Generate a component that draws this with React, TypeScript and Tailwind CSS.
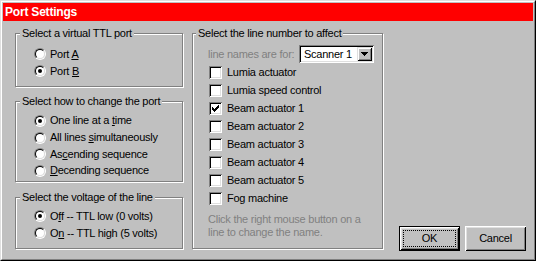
import * as React from 'react';

const sunken =
  'shadow-[inset_1px_1px_0_#808080,inset_-1px_-1px_0_#fff,inset_2px_2px_0_#000,inset_-2px_-2px_0_#dfdfdf]';
const raised =
  'shadow-[inset_1px_1px_0_#dfdfdf,inset_-1px_-1px_0_#000,inset_2px_2px_0_#fff,inset_-2px_-2px_0_#808080]';

const Hot = ({ children }: { children: React.ReactNode }) => (
  <span className="underline underline-offset-[1px] decoration-1">{children}</span>
);

const Radio = ({ checked }: { checked?: boolean }) => (
  <div className="size-[12px] shrink-0 rounded-full border border-t-[#808080] border-l-[#808080] border-r-white border-b-white">
    <div className="flex size-full items-center justify-center rounded-full border border-t-black border-l-black border-r-[#dfdfdf] border-b-[#dfdfdf] bg-white">
      {checked && <div className="size-[4px] rounded-full bg-black" />}
    </div>
  </div>
);

const Check = ({ checked }: { checked?: boolean }) => (
  <div className={`size-[13px] shrink-0 bg-white ${sunken}`}>
    {checked && (
      <svg width="13" height="13" viewBox="0 0 13 13" shapeRendering="crispEdges">
        <path
          d="M3 5h1v3H3zM4 6h1v3H4zM5 7h1v3H5zM6 6h1v3H6zM7 5h1v3H7zM8 4h1v3H8zM9 3h1v3H9z"
          fill="#000"
        />
      </svg>
    )}
  </div>
);

const Group = ({
  title,
  className,
  titleClass = 'ml-[4px]',
  children,
}: {
  title: string;
  className?: string;
  titleClass?: string;
  children: React.ReactNode;
}) => (
  <div
    className={`flex flex-col border border-[#808080] shadow-[inset_1px_1px_0_#fff,1px_1px_0_#fff] ${className ?? ''}`}
  >
    <div className={`-mt-[7px] w-fit bg-[#c0c0c0] px-[2px] ${titleClass}`}>{title}</div>
    {children}
  </div>
);

const RadioRow = ({
  checked,
  h = 'h-[17px]',
  children,
}: {
  checked?: boolean;
  h?: string;
  children: React.ReactNode;
}) => (
  <div className={`flex items-center gap-[4px] pl-[18px] ${h}`}>
    <Radio checked={checked} />
    <span>{children}</span>
  </div>
);

const lines = [
  'Lumia actuator',
  'Lumia speed control',
  'Beam actuator 1',
  'Beam actuator 2',
  'Beam actuator 3',
  'Beam actuator 4',
  'Beam actuator 5',
  'Fog machine',
];

export default function App() {
  const [checked] = React.useState(2);

  return (
    <div className="h-[261px] w-[536px] border border-t-[#dfdfdf] border-l-[#dfdfdf] border-r-black border-b-black bg-[#c0c0c0] font-['Liberation_Sans',Arial,sans-serif] text-[11px] leading-[13px] tracking-[-0.25px] text-black">
      <div className="flex h-full flex-col border border-t-white border-l-white border-r-[#808080] border-b-[#808080] p-[1px]">
        <div className="flex h-[18px] shrink-0 items-center bg-[#ff0000] pl-[2px] pt-[1px] text-[12px] font-bold tracking-[-0.2px] text-white">
          Port Settings
        </div>

        <div className="flex flex-1 pl-[12px] pt-[12px]">
          <div className="flex w-[168px] flex-col">
            <Group title="Select a virtual TTL port" className="h-[54px]">
              <div className="mt-[5.5px]">
                <RadioRow>
                  Port <Hot>A</Hot>
                </RadioRow>
                <RadioRow checked>
                  Port <Hot>B</Hot>
                </RadioRow>
              </div>
            </Group>

            <Group title="Select how to change the port" className="mt-[14px] h-[81px]">
              <div className="mt-[4.5px]">
                <RadioRow checked h="h-[16.7px]">
                  One line at a <Hot>t</Hot>ime
                </RadioRow>
                <RadioRow h="h-[16.7px]">
                  All lines <Hot>s</Hot>imultaneously
                </RadioRow>
                <RadioRow h="h-[16.7px]">
                  As<Hot>c</Hot>ending sequence
                </RadioRow>
                <RadioRow h="h-[16.7px]">
                  <Hot>D</Hot>ecending sequence
                </RadioRow>
              </div>
            </Group>

            <Group title="Select the voltage of the line" className="mt-[15px] h-[52px]">
              <div className="mt-[3.5px]">
                <RadioRow checked>
                  O<Hot>f</Hot>f -- TTL low (0 volts)
                </RadioRow>
                <RadioRow>
                  O<Hot>n</Hot> -- TTL high (5 volts)
                </RadioRow>
              </div>
            </Group>
          </div>

          <Group
            title="Select the line number to affect"
            className="ml-[9px] h-[216px] w-[191px]"
            titleClass="ml-[3px]"
          >
            <div className="mt-[5px] flex h-[18px] items-center justify-between pl-[15px] pr-[8px]">
              <span className="text-[#808080]">line names are for:</span>
              <div className={`flex h-[18px] w-[75px] items-center bg-white p-[2px] ${sunken}`}>
                <span className="flex-1 pl-[3px]">Scanner 1</span>
                <div className={`flex h-[14px] w-[15px] items-center justify-center bg-[#c0c0c0] ${raised}`}>
                  <svg width="7" height="4" viewBox="0 0 7 4" shapeRendering="crispEdges">
                    <path d="M0 0h7v1H0zM1 1h5v1H1zM2 2h3v1H2zM3 3h1v1H3z" fill="#000" />
                  </svg>
                </div>
              </div>
            </div>

            <div className="flex flex-col">
              {lines.map((name, i) => (
                <div key={name} className="flex h-[18px] items-center gap-[5px] pl-[16px]">
                  <Check checked={i === checked} />
                  <span>{name}</span>
                </div>
              ))}
            </div>

            <p className="mt-[6px] pl-[15px] text-[#808080]">
              Click the right mouse button on a
              <br />
              line to change the name.
            </p>
          </Group>

          <div className="mb-[7px] ml-[16px] flex gap-[5px] self-end">
            <button className="h-[25px] w-[61px] border border-black bg-[#c0c0c0] p-0 shadow-[inset_1px_1px_0_#fff,inset_-1px_-1px_0_#000,inset_2px_2px_0_#dfdfdf,inset_-2px_-2px_0_#808080]">
              <div className="mx-[3px] flex h-[17px] items-center justify-center border border-dotted border-black">
                OK
              </div>
            </button>
            <button className="h-[25px] w-[61px] bg-[#c0c0c0] p-0 shadow-[inset_1px_1px_0_#fff,inset_-1px_-1px_0_#000,inset_2px_2px_0_#dfdfdf,inset_-2px_-2px_0_#808080]">
              Cancel
            </button>
          </div>
        </div>
      </div>
    </div>
  );
}
